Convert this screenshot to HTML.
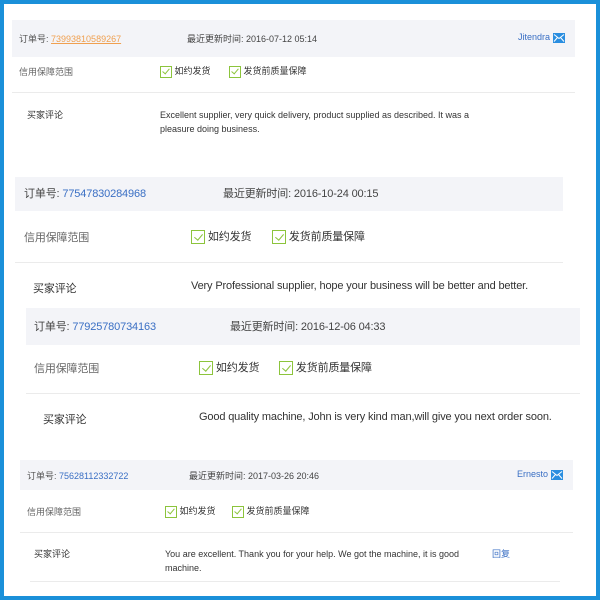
<!DOCTYPE html>
<html><head><meta charset="utf-8"><style>
*{margin:0;padding:0;box-sizing:border-box}
body{width:600px;height:600px;background:#1a90d9;position:relative;overflow:hidden;font-family:"Liberation Sans","Noto Sans CJK SC",sans-serif;color:#333}
.in{position:absolute;left:4px;top:4px;width:592px;height:592px;background:#fff}
.t{position:absolute;white-space:nowrap;letter-spacing:0}
.m{letter-spacing:-0.15px}
.h{position:absolute;background:#f3f4f8}
.ln{position:absolute;height:1px;background:#ebebeb}
.cb{display:inline-block;border:1.5px solid #8cc43c;vertical-align:middle;position:relative}
.cb:after{content:"";position:absolute;left:30%;top:5%;width:30%;height:60%;border-right:1.5px solid #8cc43c;border-bottom:1.5px solid #8cc43c;transform:rotate(40deg)}
.b{color:#3a6fc4}
.g{color:#666}
.mail{display:inline-block;vertical-align:middle}
</style></head><body><div class="in"></div>

<!-- block1 -->
<div class="h" style="left:12px;top:20px;width:563px;height:37px"></div>
<div class="ln" style="left:12px;top:92px;width:563px"></div>
<div class="t" style="left:19px;top:32px;font-size:9px;color:#555">订单号: <span style="color:#f0a050;text-decoration:underline">73993810589267</span></div>
<div class="t" style="left:187px;top:32px;font-size:9px;color:#444">最近更新时间: 2016-07-12 05:14</div>
<div class="t" style="left:518px;top:32px;font-size:9px"><span class="b">Jitendra</span> <svg class="mail" width="12" height="10" viewBox="0 0 12 10"><rect width="12" height="10" fill="#2a8ee0"/><path d="M1 1.5L6 5.5L11 1.5M1 8.5L4.5 4.5M11 8.5L7.5 4.5" stroke="#fff" stroke-width="1" fill="none"/></svg></div>
<div class="t g" style="left:19px;top:65px;font-size:9px">信用保障范围</div>
<div class="t" style="left:160px;top:64px;font-size:9px"><span class="cb" style="width:12px;height:12px"></span> 如约发货</div>
<div class="t" style="left:229px;top:64px;font-size:9px"><span class="cb" style="width:12px;height:12px"></span> 发货前质量保障</div>
<div class="t" style="left:27px;top:108px;font-size:9px">买家评论</div>
<div class="t" style="left:160px;top:108px;font-size:9px;line-height:14px">Excellent supplier, very quick delivery, product supplied as described. It was a<br>pleasure doing business.</div>

<!-- block2 -->
<div class="h" style="left:15px;top:177px;width:548px;height:34px"></div>
<div class="ln" style="left:15px;top:262px;width:548px"></div>
<div class="t m" style="left:24px;top:185px;font-size:11px;color:#444">订单号: <span class="b">77547830284968</span></div>
<div class="t m" style="left:223px;top:185px;font-size:11px;color:#444">最近更新时间: 2016-10-24 00:15</div>
<div class="t g m" style="left:24px;top:229px;font-size:11px">信用保障范围</div>
<div class="t m" style="left:191px;top:228px;font-size:11px"><span class="cb" style="width:14px;height:14px"></span> 如约发货</div>
<div class="t m" style="left:272px;top:228px;font-size:11px"><span class="cb" style="width:14px;height:14px"></span> 发货前质量保障</div>
<div class="t m" style="left:33px;top:280px;font-size:11px">买家评论</div>
<div class="t m" style="left:191px;top:280px;font-size:11px">Very Professional supplier, hope your business will be better and better.</div>

<!-- block3 -->
<div class="h" style="left:26px;top:308px;width:554px;height:37px"></div>
<div class="ln" style="left:26px;top:393px;width:554px"></div>
<div class="t m" style="left:34px;top:318px;font-size:11px;color:#444">订单号: <span class="b">77925780734163</span></div>
<div class="t m" style="left:230px;top:318px;font-size:11px;color:#444">最近更新时间: 2016-12-06 04:33</div>
<div class="t g m" style="left:34px;top:360px;font-size:11px">信用保障范围</div>
<div class="t m" style="left:199px;top:359px;font-size:11px"><span class="cb" style="width:14px;height:14px"></span> 如约发货</div>
<div class="t m" style="left:279px;top:359px;font-size:11px"><span class="cb" style="width:14px;height:14px"></span> 发货前质量保障</div>
<div class="t m" style="left:43px;top:411px;font-size:11px">买家评论</div>
<div class="t m" style="left:199px;top:411px;font-size:11px">Good quality machine, John is very kind man,will give you next order soon.</div>

<!-- block4 -->
<div class="h" style="left:20px;top:460px;width:553px;height:30px"></div>
<div class="ln" style="left:20px;top:532px;width:553px"></div>
<div class="ln" style="left:30px;top:581px;width:530px"></div>
<div class="t" style="left:27px;top:469px;font-size:9px;color:#555">订单号: <span class="b">75628112332722</span></div>
<div class="t" style="left:189px;top:469px;font-size:9px;color:#444">最近更新时间: 2017-03-26 20:46</div>
<div class="t" style="left:517px;top:469px;font-size:9px"><span class="b">Ernesto</span> <svg class="mail" width="12" height="10" viewBox="0 0 12 10"><rect width="12" height="10" fill="#2a8ee0"/><path d="M1 1.5L6 5.5L11 1.5M1 8.5L4.5 4.5M11 8.5L7.5 4.5" stroke="#fff" stroke-width="1" fill="none"/></svg></div>
<div class="t g" style="left:27px;top:505px;font-size:9px">信用保障范围</div>
<div class="t" style="left:165px;top:504px;font-size:9px"><span class="cb" style="width:12px;height:12px"></span> 如约发货</div>
<div class="t" style="left:232px;top:504px;font-size:9px"><span class="cb" style="width:12px;height:12px"></span> 发货前质量保障</div>
<div class="t" style="left:34px;top:547px;font-size:9px">买家评论</div>
<div class="t" style="left:165px;top:547px;font-size:9px;line-height:14px">You are excellent. Thank you for your help. We got the machine, it is good<br>machine.</div>
<div class="t b" style="left:492px;top:547px;font-size:9px">回复</div>
</body></html>
